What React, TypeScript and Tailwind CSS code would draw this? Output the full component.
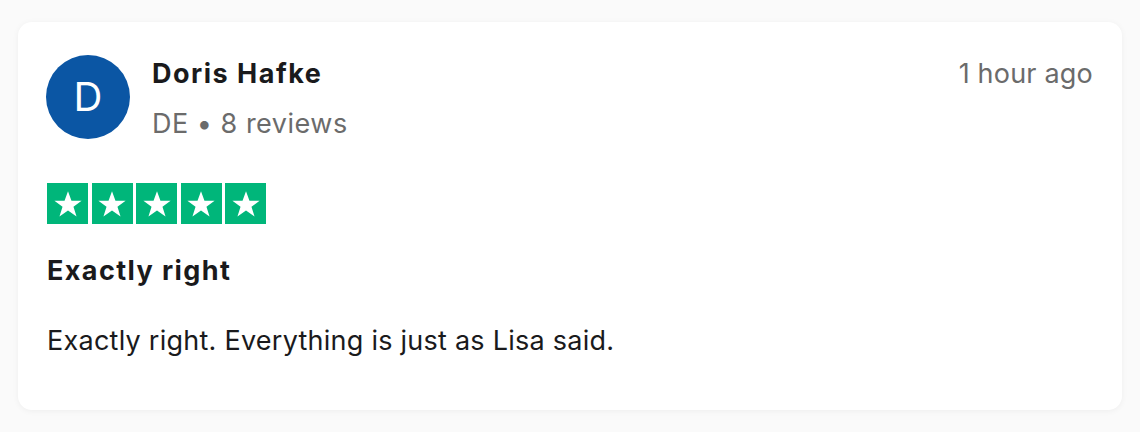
function Star() {
  return (
    <div className="flex h-[41px] w-[41px] items-center justify-center bg-[#00b67a]">
      <svg viewBox="0 0 24 24" className="h-[32px] w-[32px]" fill="white">
        <path d="M12 2.5l2.6 7.1h7.6l-6.1 4.5 2.3 7.3L12 16.9l-6.4 4.5 2.3-7.3-6.1-4.5h7.6z" />
      </svg>
    </div>
  );
}

export default function App() {
  return (
    <div className="min-h-[432px] w-[1140px] bg-[#fafafa] px-[18px] pt-[22px] font-['Inter',sans-serif]">
      <div className="h-[388px] rounded-[14px] bg-white pl-[28px] pr-[29px] pt-[33px] shadow-[0_1px_6px_rgba(0,0,0,0.05)]">
        <div className="flex items-start">
          <div className="flex h-[84px] w-[84px] shrink-0 items-center justify-center rounded-full bg-[#0b56a4] text-[40px] font-normal text-white">
            D
          </div>
          <div className="ml-[22px] pt-[2px]">
            <div className="text-[27px] font-bold leading-[34px] tracking-[1.5px] text-[#1a1a1c]">Doris Hafke</div>
            <div className="mt-[16px] text-[27px] leading-[34px] tracking-[0.5px] text-[#6b6b6b]">DE • 8 reviews</div>
          </div>
          <div className="ml-auto pt-[2px] text-[27px] leading-[34px] tracking-[0.2px] text-[#6b6b6b]">1 hour ago</div>
        </div>
        <div className="ml-px mt-[42px] flex gap-[3.5px]">
          <Star />
          <Star />
          <Star />
          <Star />
          <Star />
        </div>
        <div className="ml-px mt-[30px] text-[27px] font-bold leading-[34px] tracking-[1.4px] text-[#1a1a1c]">Exactly right</div>
        <div className="ml-px mt-[36px] text-[27px] leading-[34px] tracking-[0.25px] text-[#1a1a1c]">
          Exactly right. Everything is just as Lisa said.
        </div>
      </div>
    </div>
  );
}
